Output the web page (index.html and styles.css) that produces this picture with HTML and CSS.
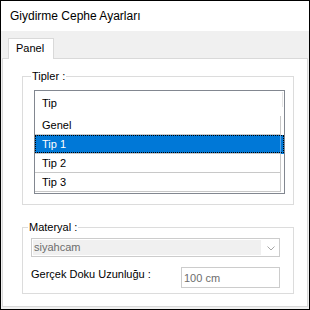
FILE: index.html
```html
<!DOCTYPE html>
<html lang="tr">
<head>
    <meta charset="UTF-8">
    <title>Giydirme Cephe Ayarları</title>
    <link rel="stylesheet" href="styles.css">
</head>
<body>
    <div class="window">
        <div class="titlebar">Giydirme Cephe Ayarları</div>

        <div class="tabs">
            <div class="tab-strip">
                <div class="tab active">Panel</div>
            </div>

            <div class="tab-page">
                <fieldset class="group group-types">
                    <legend>Tipler :</legend>
                    <div class="listview">
                        <div class="lv-header">
                            <span class="lv-col">Tip</span>
                            <span class="lv-sep"></span>
                        </div>
                        <div class="lv-row"><span class="lv-cell">Genel</span></div>
                        <div class="lv-row selected"><span class="lv-cell">Tip 1</span></div>
                        <div class="lv-row"><span class="lv-cell">Tip 2</span></div>
                        <div class="lv-row"><span class="lv-cell">Tip 3</span></div>
                    </div>
                </fieldset>

                <fieldset class="group group-material">
                    <legend>Materyal :</legend>
                    <div class="combo disabled">
                        <span class="combo-text">siyahcam</span>
                        <span class="combo-arrow">
                            <svg width="8" height="5" viewBox="0 0 8 5">
                                <polyline points="0.5,0.5 4,4 7.5,0.5" fill="none" stroke="#a6a6a6" stroke-width="1"/>
                            </svg>
                        </span>
                    </div>
                    <div class="field-row">
                        <label for="length">Gerçek Doku Uzunluğu :</label>
                        <input type="text" id="length" class="textbox" value="100 cm" readonly>
                    </div>
                </fieldset>
            </div>
        </div>
    </div>
</body>
</html>
```

FILE: styles.css
```css
* {
    margin: 0;
    padding: 0;
    box-sizing: border-box;
}

body {
    font-family: 'Liberation Sans', Arial, sans-serif;
    font-size: 11px;
    color: #000;
    background: #fff;
}

.window {
    width: 310px;
    height: 310px;
    border: 1px solid #000;
    display: flex;
    flex-direction: column;
    background: #fff;
}

.titlebar {
    height: 30px;
    line-height: 30px;
    padding-left: 9px;
    font-size: 12px;
}

.tabs {
    flex: 1;
    display: flex;
    flex-direction: column;
    background: #f0f0f0;
    padding: 0 1px 2px 1px;
}

.tab-strip {
    display: flex;
    padding: 7px 0 0 6px;
}

.tab {
    width: 46px;
    height: 21px;
    margin-bottom: -1px;
    padding-left: 7px;
    line-height: 18px;
    background: #fff;
    border: 1px solid #d9d9d9;
    border-bottom: none;
    position: relative;
    z-index: 1;
}

.tab-page {
    flex: 1;
    background: #fff;
    border: 1px solid #d9d9d9;
    padding: 0 13px 0 19px;
}

/* group boxes */
.group {
    border: 1px solid #dcdcdc;
    min-width: 0;
}

.group legend {
    margin-left: -3px;
    padding: 0 1px;
    line-height: 13px;
}

.group-types {
    margin-top: 11px;
    padding: 7px 8px 10px 11px;
}

.group-material {
    margin-top: 16px;
    padding: 4px 13px 5px 8px;
}

/* list view */
.listview {
    border: 1px solid #828790;
    background: #fff;
    padding-bottom: 1px;
}

.lv-header {
    display: flex;
    height: 25px;
}

.lv-col {
    width: 247px;
    padding-left: 7px;
    line-height: 24px;
}

.lv-sep {
    width: 1px;
    height: 15px;
    margin-top: 1px;
    background: #e5e5e5;
}

.lv-row {
    display: flex;
    height: 19px;
    position: relative;
}

.lv-cell {
    width: 246px;
    padding-left: 7px;
    line-height: 18px;
    border-right: 1px solid #c8c8c8;
    border-bottom: 1px solid #c8c8c8;
}

.lv-row.selected {
    background: #0078d7;
    color: #fff;
}

.lv-row.selected .lv-cell {
    border-right-color: #5ea6e6;
}

.lv-row.selected:after {
    content: '';
    position: absolute;
    left: 0;
    right: 0;
    top: 0;
    bottom: 1px;
    border: 1px dotted #000;
}

/* combo box */
.combo {
    display: flex;
    height: 19px;
    border: 1px solid #cccccc;
    padding: 1px;
    background: #fff;
}

.combo-text {
    flex: 1;
    background: #f0f0f0;
    color: #6d6d6d;
    padding-left: 1px;
    line-height: 15px;
}

.combo-arrow {
    width: 17px;
    display: flex;
    align-items: center;
    justify-content: center;
    padding: 2px 0 0 2px;
}

.combo-arrow svg {
    display: block;
}

/* length row */
.field-row {
    display: flex;
    justify-content: space-between;
    align-items: flex-start;
    margin-top: 10px;
}

.field-row label {
    margin-top: 1px;
    line-height: 13px;
}

.textbox {
    width: 99px;
    height: 21px;
    border: 1px solid #cccccc;
    padding-left: 2px;
    font-family: 'Liberation Sans', Arial, sans-serif;
    font-size: 11px;
    color: #6d6d6d;
    background: #fff;
    outline: none;
}
```
